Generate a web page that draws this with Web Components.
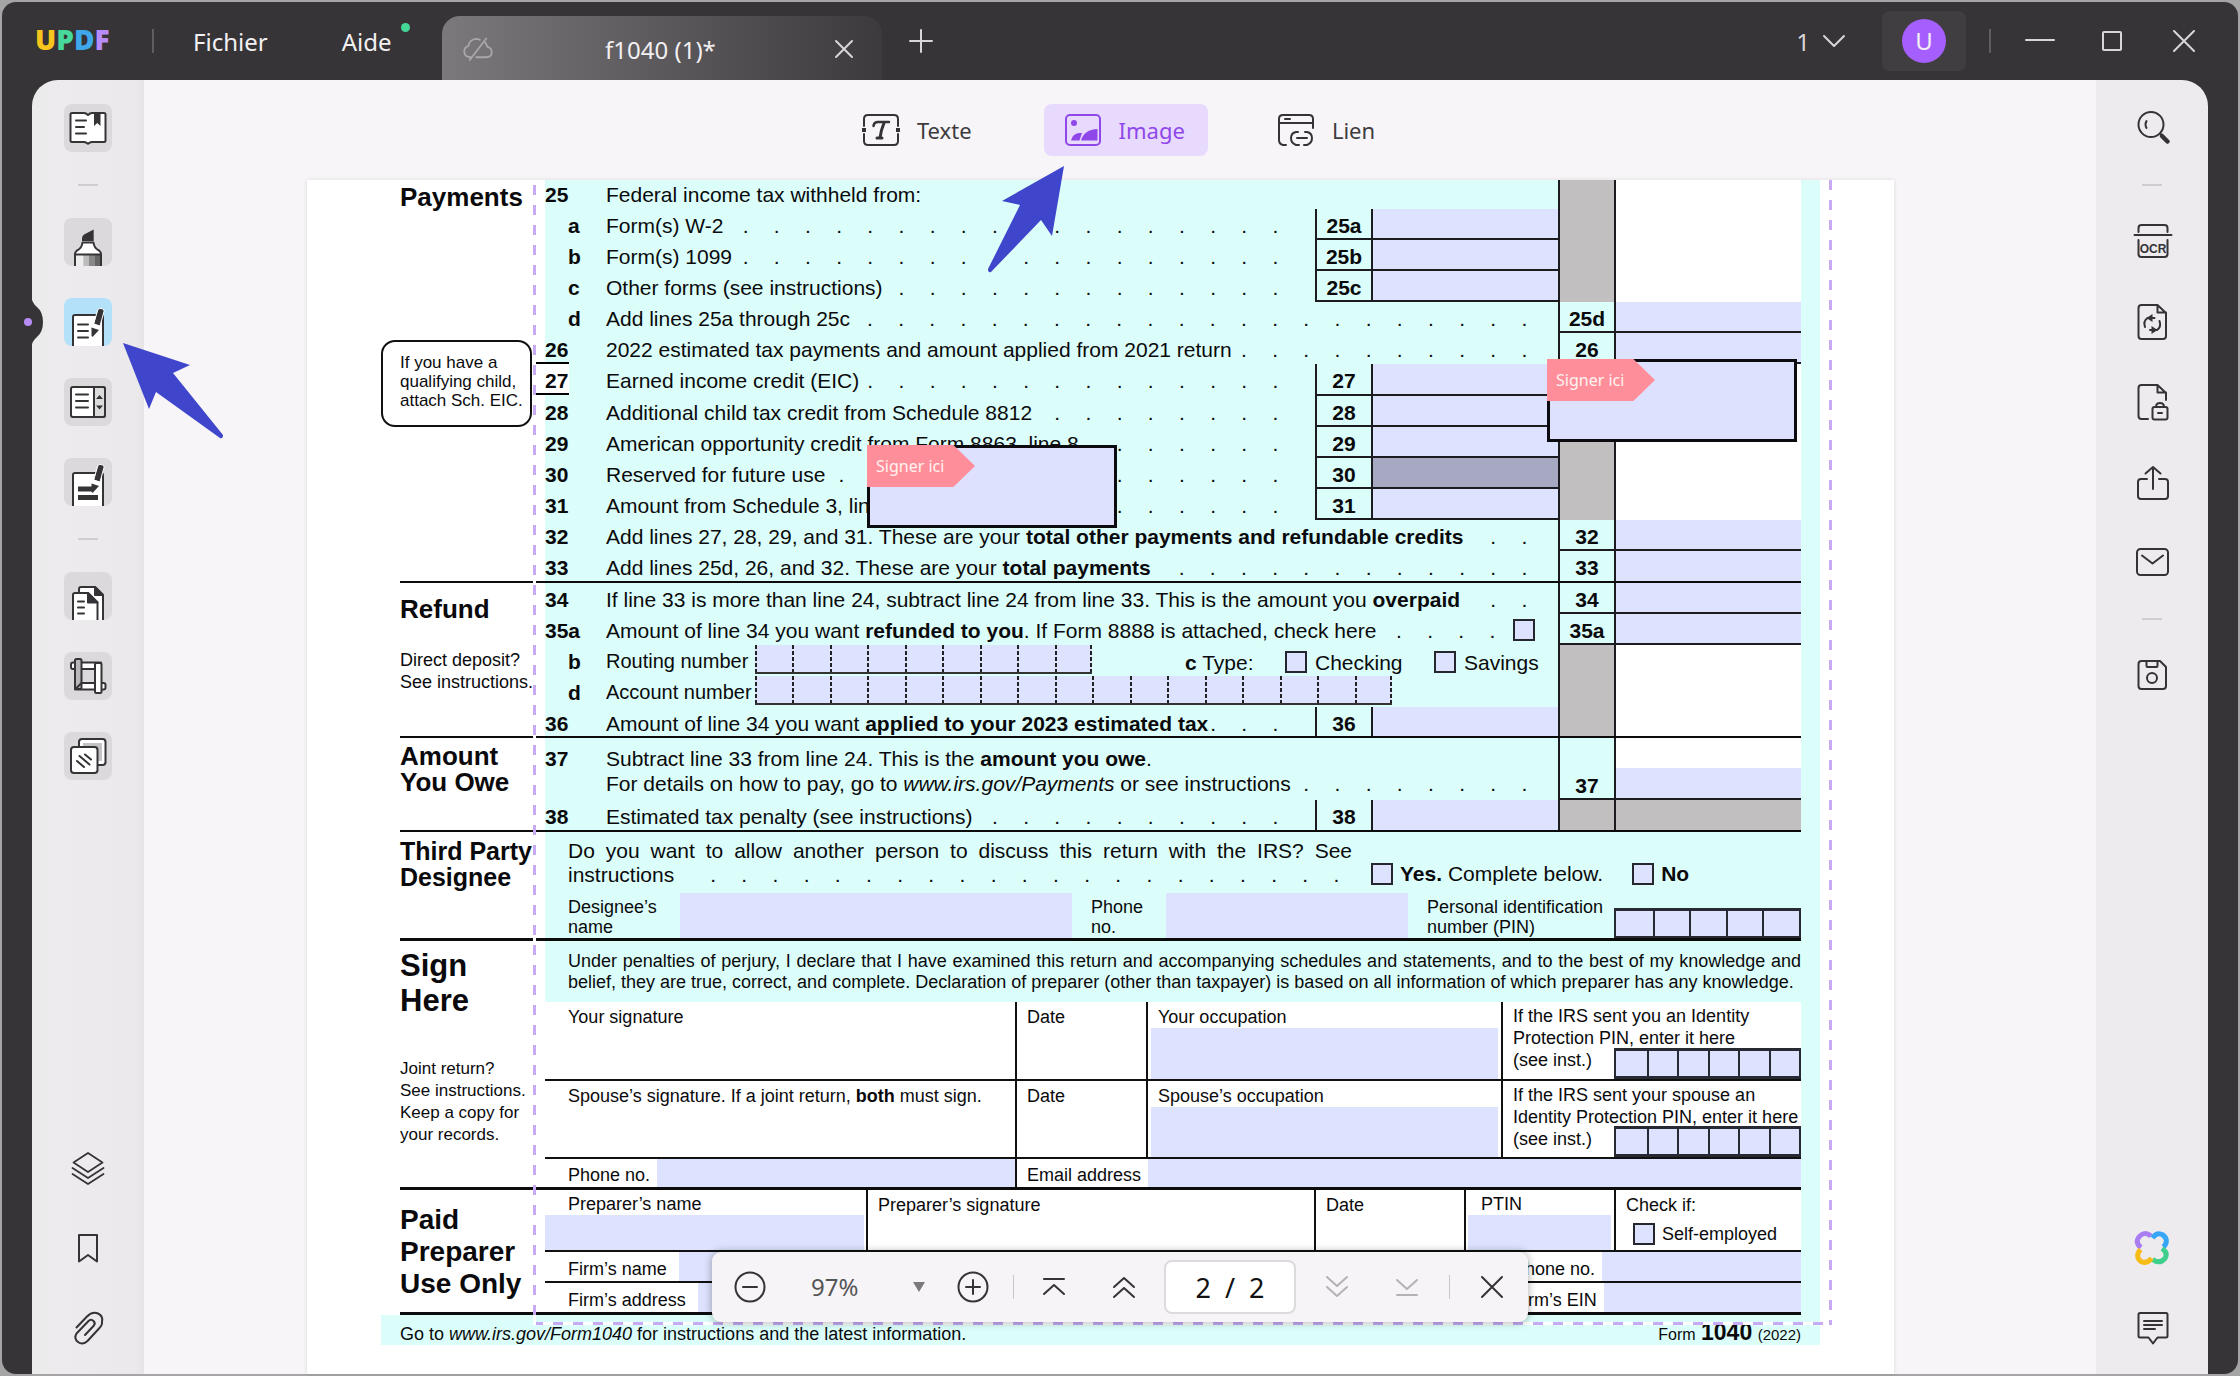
<!DOCTYPE html>
<html lang="fr">
<head>
<meta charset="utf-8">
<title>UPDF - f1040 (1)</title>
<style>
html, body { height: 100%; }
body { margin: 0; background: #a6a5a6; font-family: "Noto Sans", "Open Sans", sans-serif; }
</style>
</head>
<body>
<updf-window></updf-window>
<script>
const define = (name, html, setup) => {
  const template = document.createElement('template');
  template.innerHTML = html;
  customElements.define(name, class extends HTMLElement {
    connectedCallback() {
      if (this.shadowRoot) return;
      const root = this.attachShadow({ mode: 'open' });
      root.append(template.content.cloneNode(true));
      if (setup) setup(this, root);
    }
  });
};

/* ---------- icons ---------- */
const INK = '#353336';
const pencil = y => `<g transform="translate(0 ${y})"><path d="M34 11.500q1-1.500 3-1l1.500.5q2 .8 1.500 2.500L36 28l-6-2z" fill="${INK}" stroke="#fff" stroke-width="1"/><path d="M27.500 29.500l7.500 2.500-6 6.500q-1.500.5-1.500-1z" fill="${INK}" stroke="none"/></g>`;
const ICONS = {
  book: `<path d="M8 9h12q2 0 4 2 2-2 4-2h12q1.500 0 1.500 1.500v26q0 1.500-1.500 1.500H28q-2 0-4 1.800-2-1.800-4-1.800H8q-1.500 0-1.500-1.500v-26Q6.500 9 8 9z" fill="#fff"/><path d="M12 16.500h10M12 23h8M12 29.500h10"/><path d="M30 9h6.500v13l-3.200-3-3.300 3z" fill="${INK}" stroke="none"/>`,
  marker: `<defs><linearGradient id="g"><stop offset=".3" stop-color="#eee"/><stop offset=".32" stop-color="#bbb"/><stop offset=".55" stop-color="#bbb"/><stop offset=".56" stop-color="#888"/><stop offset=".78" stop-color="#888"/><stop offset=".8" stop-color="#666"/></linearGradient></defs><path d="M18 23v-3q0-2 2-3.500l9.700-5V23z" fill="${INK}" stroke="none"/><path d="M11 49V36q0-2 2-3.500 5-2.500 5.500-8h11q.5 5.500 5.500 8 2 1.500 2 3.500v13z" fill="#fff"/><path d="M12 37h24v12H12z" fill="url(#g)" stroke="none"/><path d="M11 36.500h26"/>`,
  edit: `<path d="M9 49V19q0-2 2-2h26q2 0 2 2v30z" fill="#fff"/><path d="M14 26.500h10M14 33h10M14 39.500h10"/>${pencil(0)}`,
  formfield: `<rect x="7" y="9" width="34" height="30" rx="2" fill="#fff"/><path d="M30 9h9q2 0 2 2v26q0 2-2 2h-9z" fill="#dcdcdc"/><path d="M12 16.500h12M12 23h12M12 29.500h12"/><path d="M32 21l3.500-4 3.500 4zM32 27.500l3.500 4 3.500-4z" fill="${INK}" stroke="none"/>`,
  redact: `<path d="M9 49V17q0-2 2-2h26q2 0 2 2v32z" fill="#fff"/><path d="M14 28.500h14v5H14zM14 37h20v5H14z" fill="${INK}" stroke="none"/>${pencil(-4)}`,
  pages: `<path d="M15 49V17q0-2 2-2h14l8 8v26z" fill="#fff"/><path d="M31 15l8 8h-8z" fill="${INK}"/><path d="M9 49V23q0-2 2-2h13l9.500 9.500V49z" fill="#fff"/><path d="M24 21l9.500 9.500H24z" fill="${INK}"/><path d="M14 29.500h6M14 35.500h6M14 41.500h6"/>`,
  crop: `<rect x="7" y="10.500" width="30" height="6.500" rx="2" fill="#fff"/><rect x="11" y="31" width="30.500" height="6.500" rx="2" fill="#fff"/><rect x="11" y="7" width="6.500" height="30" rx="1.500" fill="#b9b7b9"/><path d="M11 37.500l6.500-6.500M31 17l6-6.500"/><rect x="31" y="11" width="6.500" height="30" rx="1.500" fill="#fff"/>`,
  stack: `<rect x="15" y="7" width="26.500" height="26" rx="3" fill="#fff"/><rect x="19" y="11" width="19" height="18" fill="#c4c2c4" stroke="none"/><rect x="7" y="15" width="26.500" height="26" rx="3" fill="#fff"/><path d="M13 29l7 6M15.500 24l10 8.500M21 22.500l6 5"/>`,
  layers: `<path d="M24 9l14.500 9.500L24 28 9.500 18.500zM8.500 24L24 34l15.500-10M8.500 30L24 40l15.500-10" stroke-width="1.800"/>`,
  mark: `<path d="M15 11h18v26.500L24 31l-9 6.500z"/>`,
  clip: `<path d="M12.500 23.500L23 12.500q5.500-5.500 11-3t4 8.500q.5 3-3 6.500L23.500 37q-5 4.500-9.500 1t-1.500-8.500l12-12.500q2.500-2.500 5 0t0 5L21 31"/>`,
  search: `<circle cx="23" cy="20.500" r="12.500"/><path d="M18.500 17q-2 3.500 0 7" /><path d="M32.500 30l2 2" /><path d="M34 32l5.500 5.500" stroke-width="4.500"/>`,
  ocr: `<path d="M10.500 14V10q0-3 3-3h23q3 0 3 3v4M6.500 17h37M10.500 22v14q0 3 3 3h23q3 0 3-3V22"/><text x="25" y="34.500" text-anchor="middle" font-family="Liberation Sans, sans-serif" font-weight="700" font-size="12" fill="${INK}" stroke="none">OCR</text>`,
  convert: `<path d="M13.500 7h16l8.500 8v23q0 3-3 3H13.500q-3 0-3-3V10q0-3 3-3zM29.500 7v7.500H38"/><path d="M17 29q-2-6 2.500-9h7M31.500 23q2 6-2.500 9h-7"/><path d="M18.500 20l6-4v8zM29.500 32l-6-4v8z" fill="${INK}" stroke="none"/>`,
  lock: `<path d="M20 41h-6.500q-3 0-3-3V10q0-3 3-3h16l8.500 8v7M29.500 7v7.500H38"/><rect x="24.500" y="29" width="15" height="12.500" rx="2"/><path d="M28 29q0-4 4-4t4 4M30 35h4"/>`,
  share: `<path d="M19 21h-6q-3 0-3 3v14q0 3 3 3h24q3 0 3-3V24q0-3-3-3h-6M25 31V9M17.500 15.500L25 9l7.500 6.500"/>`,
  mail: `<rect x="9" y="11" width="31" height="26" rx="3.500"/><path d="M14 17.500l10.500 8 10.500-8"/>`,
  save: `<path d="M13.500 9H32l6 6v19q0 3-3 3H13.500q-3 0-3-3V12q0-3 3-3zM18.500 9v5q0 1 1 1h9q1 0 1-1V9"/><circle cx="24" cy="26" r="5"/>`,
  petals: `<g fill="none" stroke-width="5" stroke-linecap="butt"><path d="M13 23.500q-6-4.500-2.500-10Q16 6.500 23 12" stroke="#ab7df2"/><path d="M24.500 14q4.500-6.500 10.500-3 6.500 5.500.5 12" stroke="#37a6f5"/><path d="M34 24.500q6.500 4.500 3 10-5.500 6-12.500 1" stroke="#3fcf8d"/><path d="M23.500 34q-4 6.500-10.500 3.500-6.500-5-.5-12" stroke="#f6bd19"/></g>`,
  comment: `<path d="M12 9h26q1.500 0 1.500 1.500V32q0 1.500-1.500 1.500h-8.500L25 39.500l-4.500-6H12q-1.500 0-1.500-1.500V10.500Q10.500 9 12 9zM16 17h18M16 21h18M16 25h11"/>`,
  cloud: `<path d="M17 33h-2q-6-1-6-6.500 0-4.500 4.500-6 1.500-7 8.500-7.500 2 0 4 1M32 17q1.500 2 2 4.500 5 1.500 5 6 0 5-6 5.500H22M33 12.500L15 36" stroke="#a9a7a9"/>`,
  close: `<path d="M16 16l16 16M32 16L16 32" stroke="currentColor"/>`,
  bigclose: `<path d="M14 14l20 20M34 14L14 34" stroke="currentColor"/>`,
  add: `<path d="M24 13v22M13 24h22" stroke="#d8d6d8"/>`,
  minimise: `<path d="M10 23h28" stroke="#d8d6d8"/>`,
  maximise: `<rect x="15" y="15" width="18" height="18" rx="1" stroke="#d8d6d8"/>`,
  chevron: `<path d="M14 19l10 10 10-10" stroke="#d8d6d8"/>`,
  text: `<path d="M7 20v-7q0-4 4-4h26q4 0 4 4v7M7 28v7q0 4 4 4h26q4 0 4-4v-7"/><path d="M5 24h4M39 24h4" stroke-width="4" stroke-linecap="butt"/><path d="M16.500 20q.5-4 4.500-4h11" stroke-width="2.500"/><path d="M27 17q-3 7-4 15M20 32h5" stroke-width="3"/>`,
  image: `<rect x="7" y="9" width="34" height="30" rx="4" stroke="#9047ea"/><circle cx="15" cy="17" r="3" fill="#9047ea" stroke="none"/><path d="M12 34.500q1.500-7 8-7.500h3l-2.500 7.500zM22 34.500q3-11 16.500-11.500v11.500z" fill="#9047ea" stroke="none"/>`,
  link: `<path d="M14 39h-3q-4-1-4-5V13q0-4 4-4h26q4 0 4 4v9M7 17h34M13 13h5"/><path d="M26 26h-2q-5 1-5 6t5 7h3M33 26h2q5 1 5 6t-5 7h-3M25 32h10"/>`,
  zoomout: `<circle cx="24" cy="24" r="14.500"/><path d="M17 24h14"/>`,
  zoomin: `<circle cx="24" cy="24" r="14.500"/><path d="M17 24h14M24 17v14"/>`,
  first: `<path d="M14 16h20M14 31l10-9 10 9"/>`,
  prev: `<path d="M14 24l10-9 10 9M14 34l10-9 10 9"/>`,
  next: `<path d="M14 14l10 9 10-9M14 24l10 9 10-9" stroke="#b4b2b4"/>`,
  last: `<path d="M14 17l10 9 10-9M14 32h20" stroke="#b4b2b4"/>`
};
define('ui-icon', `<style>:host{display:block;width:48px;height:48px;flex:none}svg{display:block;width:100%;height:100%}</style>`,
  (host, root) => root.append(Object.assign(document.createElement('div'), {
    style: 'height:100%',
    innerHTML: `<svg viewBox="0 0 48 48" fill="none" stroke="${INK}" stroke-width="2" stroke-linecap="round" stroke-linejoin="round" aria-hidden="true">${ICONS[host.getAttribute('name')]}</svg>`
  })));

/* ---------- title bar ---------- */
define('title-bar', `<style>
:host{display:flex;height:78px;align-items:center;background:#363436;color:#f2f0f2;font-size:24px;border-radius:14px 14px 0 0}
button{all:unset;cursor:pointer;display:flex;align-items:center;line-height:33px}
.logo{margin-left:33px;font-size:28px;font-weight:700;line-height:34px;width:76px;padding-bottom:4px}
.logo b:nth-child(1){color:#f8c51c}.logo b:nth-child(2){color:#46d99a}.logo b:nth-child(3){color:#3ea8ea}.logo b:nth-child(4){color:#b78cfa}
.rule{width:2px;height:24px;background:#5f5d5f}
.logo + .rule{margin-left:41px}
.menu{margin-left:39px}
.help{position:relative;margin-left:74px}
.help::after{content:"";position:absolute;right:-19px;top:-2px;width:9px;height:9px;border-radius:50%;background:#45d796}
.tab{box-sizing:border-box;width:440px;height:64px;align-self:flex-end;margin-left:51px;padding:1px 14px 0;border-radius:18px 18px 0 0;display:flex;align-items:center;background:linear-gradient(90deg,#7b797b,#5b595b 50%,#3c3a3c)}
.tab span{flex:1;text-align:center;padding-top:2px}
.tab .state{width:44px;height:44px}
.add{margin-left:15px}
.space{flex:1}
.count{color:#d8d6d8;margin-right:24px}
.user{width:84px;height:60px;justify-content:center;background:#403e40;border-radius:8px}
.user i{font-style:normal;width:44px;height:44px;border-radius:50%;background:#a65fff;text-align:center;line-height:44px}
.user + .rule{margin:0 25px 0 23px}
.win{display:flex;gap:24px;margin-right:30px;color:#d8d6d8}
.close{color:#d8d6d8}
</style>
<div class="logo" aria-label="UPDF"><b>U</b><b>P</b><b>D</b><b>F</b></div><div class="rule"></div>
<button class="menu">Fichier</button><button class="help">Aide</button>
<div class="tab"><ui-icon class="state" name="cloud"></ui-icon><span>f1040 (1)*</span><button class="close" aria-label="Fermer l’onglet"><ui-icon name="close"></ui-icon></button></div>
<button class="add" aria-label="Nouvel onglet"><ui-icon name="add"></ui-icon></button>
<div class="space"></div>
<button class="count">1<ui-icon name="chevron"></ui-icon></button>
<button class="user" aria-label="Compte"><i>U</i></button><div class="rule"></div>
<div class="win"><button aria-label="Réduire"><ui-icon name="minimise"></ui-icon></button><button aria-label="Agrandir"><ui-icon name="maximise"></ui-icon></button><button aria-label="Fermer"><ui-icon name="bigclose"></ui-icon></button></div>`);

/* ---------- side rails ---------- */
define('tool-rail', `<style>
:host{box-sizing:border-box;width:112px;flex:none;display:flex;flex-direction:column;align-items:center;gap:32px;padding:24px 0 22px;background:#edebed}
:host([side=left]){border-radius:26px 0 0 0;background:linear-gradient(90deg,#ebebea,#edebed 20%,#ebe9eb 92%,#e6e4e6)}
:host([side=right]){border-radius:0 26px 0 0}
button{all:unset;cursor:pointer;width:48px;height:48px;border-radius:8px;overflow:hidden;flex:none}
button.tile{background:#dbd9db}
button.active{background:#b4e1fa}
hr{width:20px;height:2px;border:0;margin:0;background:#cfcdcf}
.space{flex:1}
</style>`, (host, root) => {
  const tiled = host.getAttribute('side') === 'left';
  const groups = host.getAttribute('tools').split('/');
  groups[0].split(' ').forEach(name => add(name, tiled));
  root.append(Object.assign(document.createElement('div'), { className: 'space' }));
  groups[1].split(' ').forEach(name => add(name, false));
  function add(name, tile) {
    if (name === '-') return root.append(document.createElement('hr'));
    const button = document.createElement('button');
    button.setAttribute('aria-label', name);
    button.className = name === host.getAttribute('active') ? 'active' : tile ? 'tile' : '';
    button.innerHTML = `<ui-icon name="${name}"></ui-icon>`;
    root.append(button);
  }
});

/* ---------- edit bar ---------- */
define('edit-bar', `<style>
:host{display:flex;height:100px;align-items:center;justify-content:center;gap:49px;font-size:22px;color:#3d3b3e}
button{all:unset;cursor:pointer;display:flex;align-items:center;gap:12px;height:52px;padding:0 23px 0 15px;border-radius:8px}
button.on{background:#e8dafd;color:#9047ea}
</style>
<button><ui-icon name="text"></ui-icon>Texte</button><button class="on" aria-pressed="true"><ui-icon name="image"></ui-icon>Image</button><button><ui-icon name="link"></ui-icon>Lien</button>`);

/* ---------- page navigator ---------- */
define('page-nav', `<style>
:host{display:flex;align-items:center;box-sizing:border-box;width:816px;height:70px;padding:0 11px 0 14px;background:#f6f4f7;border-radius:9px;box-shadow:0 0 8px rgba(0,0,0,.35);color:#555}
button{all:unset;cursor:pointer;flex:none;color:#353336}
label{position:relative;display:flex;align-items:center;margin:0 24px 0 37px}
select{all:unset;font-size:24px;width:102px;line-height:34px}
i{width:1px;height:24px;background:#c9c7c9;margin:0 16px}
i.end{margin:0 18px}
.tri{width:0;border:6px solid transparent;border-top:10px solid #7b797b;border-bottom:0}
.gap{width:22px}
input{box-sizing:border-box;width:132px;height:54px;margin:0 17px 0 16px;border:2px solid #dcdadc;border-radius:8px;background:#fff;font:27px "Noto Sans",sans-serif;text-align:center;color:#111;padding:0}
</style>
<button aria-label="Zoom arrière"><ui-icon name="zoomout"></ui-icon></button>
<label><select aria-label="Zoom"><option>97%</option></select><span class="tri"></span></label>
<button aria-label="Zoom avant"><ui-icon name="zoomin"></ui-icon></button><i></i>
<button aria-label="Première page"><ui-icon name="first"></ui-icon></button><span class="gap"></span>
<button aria-label="Page précédente"><ui-icon name="prev"></ui-icon></button>
<input aria-label="Page" value="2  /  2">
<button aria-label="Page suivante"><ui-icon name="next"></ui-icon></button><span class="gap"></span>
<button aria-label="Dernière page"><ui-icon name="last"></ui-icon></button><i class="end"></i>
<button aria-label="Fermer"><ui-icon name="bigclose"></ui-icon></button>`);

/* ---------- form parts ---------- */
define('dot-leader', `<style>:host{display:grid;grid-auto-flow:column;grid-auto-columns:1fr;flex:none;width:calc(var(--n) * 187px / 6);text-align:center}</style>`,
  (host, root) => {
    const n = +host.getAttribute('n');
    host.style.setProperty('--n', n);
    for (let i = 0; i < n; i++) root.append(Object.assign(document.createElement('span'), { textContent: '.' }));
  });

define('tick-box', `<style>:host{display:inline-flex;flex:none}input{appearance:none;box-sizing:border-box;width:22px;height:22px;margin:0;border:2px solid #26262e;background:#dde3fe}</style><input type="checkbox">`,
  (host, root) => root.querySelector('input').setAttribute('aria-label', host.getAttribute('label')));

/* A row of one-character cells: solid for PINs, dashed for bank numbers. */
define('comb-field', `<style>
:host{--dash:repeating-linear-gradient(#222 0 4px,transparent 4px 6px);display:grid;grid-auto-flow:column;grid-auto-columns:1fr;box-sizing:border-box;flex:none;background:#dde3fe}
:host(:not([dotted])){width:187px;height:31px;border:3px solid #272a33;border-left-width:2px;border-right-width:2px}
:host([dotted]){height:29px;border-bottom:2px solid #333;background:var(--dash) 100% 0/2px 100% no-repeat #dde3fe}
input{all:unset;width:100%;box-sizing:border-box;min-width:0}
:host(:not([dotted])) input + input{border-left:2px solid #272a33}
:host([dotted]) input{background:var(--dash) 0 0/2px 100% no-repeat}
</style>`, (host, root) => {
  for (let i = 1; i <= +host.getAttribute('cells'); i++) {
    const input = document.createElement('input');
    input.maxLength = 1;
    input.setAttribute('aria-label', host.getAttribute('label') + ' ' + i);
    root.append(input);
  }
});

define('sign-tag', `<style>
:host{display:block;position:absolute;box-sizing:border-box;width:250px;height:83px;border:3px solid #0c0c10;background:#dde1fe}
span{display:block;width:108px;height:42px;margin:-3px;box-sizing:border-box;padding-left:9px;background:#ff8e9b;clip-path:polygon(0 0,80% 0,100% 50%,80% 100%,0 100%);color:#fff3f0;font:16px/42px "Noto Sans",sans-serif}
</style><span><slot></slot></span>`);

define('tax-line', `<style>
:host{display:grid;grid-template-columns:61px 1fr 56px 187px 56px 187px;grid-template-rows:100%;height:31px;margin-right:19px;font-size:21px;line-height:27px;white-space:nowrap}
:host([tall]){height:32px}:host([short]){height:29px}:host([double]){height:62px}
.no{font-weight:700;padding-top:3px;box-sizing:border-box}
.no.sub{padding-left:23px}
:host([short]) .no,:host([short]) .text{padding-top:1px}
:host([flag]) .no{width:36px;height:33px;margin:-2px 0 0 -12px;padding:3px 0 0 12px;background:#fff;border:solid #000;border-width:2px 0}
.text{display:flex;min-width:0;padding-top:3px;grid-column:2/5}
:host([box]) .text{grid-column:2/3}
:host([double]) .no{padding-top:7px}
:host([double]) .text{padding-top:8px;line-height:25px}
.fill{flex:1;min-width:0}
dot-leader{margin-right:18px}
:host([box]) dot-leader{margin-right:24px}
:host([double]) dot-leader{align-self:flex-start;padding-top:25px}
.cell{box-sizing:border-box;border:solid #1c1c20;border-width:0 0 2px 2px;font-weight:700;text-align:center;padding-top:3px}
input{all:unset;display:block;box-sizing:border-box;width:100%;height:100%;background:#dde3fe}
.entry,.amt{padding:0}
.entry[data-k=shade] input{background:#a7a9c3}
.col[data-k=grey]{background:#c1bfc0;border-bottom:0}
.amt[data-k=white]{background:#fff;border-bottom:0}
.amt[data-k=grey]{background:#c1bfbf}
.amt[data-k=half]{background:linear-gradient(#fff 50%,#dde3fe 50%)}
.amt[data-k=half] input{background:none}
.col{grid-column:5}.amt{grid-column:6}
:host([double]) .col{padding-top:34px}
</style>
<div class="no"></div>
<div class="text"><div class="fill"><slot></slot></div><slot name="end"></slot></div>`, (host, root) => {
  const get = k => host.getAttribute(k);
  const no = root.querySelector('.no');
  no.textContent = get('no');
  if (/^[a-d]$/.test(get('no'))) no.classList.add('sub');
  if (get('dots')) {
    const dots = document.createElement('dot-leader');
    dots.setAttribute('n', get('dots'));
    root.querySelector('slot[name=end]').before(dots);
    if (host.querySelector('[slot=end]')) dots.style.marginRight = '5px';
  }
  const cell = (cls, kind, text, field) => {
    const div = document.createElement('div');
    div.className = 'cell ' + cls;
    div.dataset.k = kind || '';
    if (text) div.textContent = text;
    if (field) { const i = document.createElement('input'); i.setAttribute('aria-label', field); div.append(i); }
    root.append(div);
  };
  if (get('box')) { cell('box', '', get('box')); cell('entry', get('entry'), '', 'Ligne ' + get('box')); }
  const col = get('col');
  cell('col', col ? '' : 'grey', col);
  const amt = get('amt') || (col ? 'field' : 'white');
  cell('amt', amt, '', amt === 'field' || amt === 'half' ? 'Ligne ' + col : '');
});

define('tax-section', `<style>
:host{display:grid;position:relative;grid-template-columns:145px 1fr}
:host::after{content:"";grid-column:1/-1;height:2px;margin:-2px 19px 0 0;background:#0c0c0c}
:host([heavy])::after{height:3px;margin-top:-3px}
.body{background:#dcfefa;min-width:0}
</style><div><slot name="side"></slot></div><div class="body"><slot></slot></div>`);

define('tax-form', `<style>
:host{display:block;position:relative;background:#fff;box-shadow:0 0 4px rgba(0,0,0,.12);padding:0 74px 0 93px;color:#0a0a0c;font-family:"Liberation Sans",Arial,sans-serif;font-size:18px;line-height:22px}
h2,p{margin:0}
h2{font-size:26px;line-height:26px;white-space:nowrap}
h2.third-head{font-size:25px}
h2.sign-head{font-size:31px;line-height:35px}
h2.paid-head{font-size:28px;line-height:32px}
[slot=side]{padding-top:var(--top)}
.note{margin-top:27px;white-space:nowrap}
.note.sm{margin-top:40px;font-size:17px}
input.f{all:unset;display:block;background:#dde3fe;min-width:0;box-sizing:border-box}
.callout{position:absolute;left:-19px;top:160px;width:151px;height:87px;box-sizing:border-box;border:2px solid #111;border-radius:14px;padding:11px 0 0 17px;font-size:17px;line-height:19px;background:#fff;white-space:nowrap}
.more{margin-left:13px}
.bank{display:flex;align-items:center;font-size:20px}
.bank span{width:149px}
.bank comb-field{margin-top:-5px}
.routing{width:337px}.account{width:637px}
.attach{margin:2px 23px 0 0}
.type{display:flex;align-items:center;width:373px}
.type label{display:flex;gap:8px;align-items:center}
.type span{width:100px}.type label:nth-of-type(1){width:149px}
.third{height:109px;margin-right:19px;padding-left:23px;box-sizing:border-box;font-size:21px;display:flex;flex-direction:column}
.third .q{width:784px;line-height:24px;padding-top:7px;height:52px;box-sizing:border-box}
.third .q p:first-child{text-align:justify;text-align-last:justify}
.row{display:flex}
.top{height:61px}
.inst dot-leader{margin-left:auto}
.ans{display:flex;flex:1;padding:31px 0 0 19px;gap:7px;align-items:center;height:22px}
.ans tick-box:nth-of-type(2){margin-left:22px}
.desig{display:flex;line-height:20px;height:46px;white-space:nowrap;font-size:18px}
.desig > *{flex:none}
.desig label,.desig span{padding-top:4px}
.desig .f{height:46px;margin-right:19px}
.desig comb-field{margin-top:15px}
.w1{width:112px}input.w2{width:392px}.w3{width:75px}input.w4{width:242px}
.desig span{margin-right:auto}
.decl{height:51px;margin-right:19px;padding:10px 0 0 23px;line-height:21px;white-space:nowrap}
.decl p:first-child{text-align:justify;text-align-last:justify}
.cells{display:grid;grid-template-rows:100%;margin-right:19px;background:#fff}
.sig{grid-template-columns:1fr 131px 355px 300px;height:78px}
.sig.first{height:79px}
.contact{grid-template-columns:1fr 786px;height:31px}
.prep{grid-template-columns:1fr 448px 150px 150px 187px;height:62px}
.cells > div{border-left:2px solid #111;border-bottom:2px solid #111;padding:4px 0 0 10px;box-sizing:border-box;min-width:0;white-space:nowrap}
.cells > div:first-child{border-left:0;padding-left:23px}
.occ{display:flex;flex-direction:column}
.occ .f{flex:1;margin:0 3px 0 -7px}
.cells > div.irs{position:relative;padding-top:3px}
.irs comb-field{position:absolute;right:0;bottom:0}
.cells > div.inl{display:flex;align-items:stretch;line-height:32px;padding-top:0}
.inl .f{flex:1;margin-left:7px}
.firm > .inl label{line-height:35px}
.firm > .inl .f{margin-left:12px}
.cells > div.namec{padding:4px 2px 0 0;display:flex;flex-direction:column}
.namec span{padding-left:23px;line-height:21px}.namec .f{flex:1}
.ptin{display:flex;flex-direction:column}
.cells > div.ptin{padding:4px 3px 0 2px}.ptin span{padding-left:13px;line-height:21px}.ptin .f{flex:1}
.self{display:flex;gap:7px;align-items:center;padding:7px 0 0 7px}
.firm{grid-template-columns:1fr 310px;height:31px}
.firm.last{height:32px}
.firm > div:last-child{border-left:0}
.firm > div:last-child label{margin-left:12px}
.firm > div.inl:last-child .f{margin-left:7px}
.foot{display:flex;align-items:baseline;height:30px;margin-left:-19px;padding:0 19px;line-height:34px;background:#dcfefa}
.foot span{margin-left:auto;font-size:16px}.foot b{font-size:23px;margin:0 1px}.foot small{font-size:15px}
.frame{position:absolute;left:226px;right:62px;top:0;bottom:49px;pointer-events:none;background:
 repeating-linear-gradient(#fff 0 5px,#c7aaf3 5px 15px,#fff 15px 20px) 0 0/3px 100% no-repeat,
 repeating-linear-gradient(#c7aaf3 0 10px,#fff 10px 20px) 100% 0/3px 100% no-repeat,
 repeating-linear-gradient(90deg,#c7aaf3 0 10px,#fff 10px 20px) 0 100%/100% 3px no-repeat}
.s1{left:560px;top:265px}.s2{right:97px;top:179px}
</style>
<tax-section>
 <div slot="side" style="--top:4px"><h2>Payments</h2></div>
 <div class="callout" slot="side">If you have a<br>qualifying child,<br>attach Sch. EIC.</div>
 <tax-line short no="25">Federal income tax withheld from:</tax-line>
 <tax-line no="a" dots="18" box="25a">Form(s) W-2</tax-line>
 <tax-line no="b" dots="18" box="25b">Form(s) 1099</tax-line>
 <tax-line no="c" dots="13" box="25c">Other forms (see instructions)</tax-line>
 <tax-line no="d" dots="22" col="25d">Add lines 25a through 25c</tax-line>
 <tax-line no="26" dots="10" col="26">2022 estimated tax payments and amount applied from 2021 return</tax-line>
 <tax-line tall flag no="27" dots="14" box="27">Earned income credit (EIC)</tax-line>
 <tax-line no="28" dots="8" box="28">Additional child tax credit from Schedule 8812</tax-line>
 <tax-line no="29" dots="6" box="29">American opportunity credit from Form 8863, line 8</tax-line>
 <tax-line no="30" dots="6" box="30" entry="shade">Reserved for future use<span class="more">.</span></tax-line>
 <tax-line no="31" dots="6" box="31">Amount from Schedule 3, line 15</tax-line>
 <tax-line no="32" dots="2" col="32">Add lines 27, 28, 29, and 31. These are your <b>total other payments and refundable credits</b></tax-line>
 <tax-line tall no="33" dots="12" col="33">Add lines 25d, 26, and 32. These are your <b>total payments</b></tax-line>
</tax-section>
<tax-section>
 <div slot="side" style="--top:13px"><h2>Refund</h2><p class="note">Direct deposit?<br>See instructions.</p></div>
 <tax-line no="34" dots="2" col="34">If line 33 is more than line 24, subtract line 24 from line 33. This is the amount you <b>overpaid</b></tax-line>
 <tax-line no="35a" dots="4" col="35a">Amount of line 34 you want <b>refunded to you</b>. If Form 8888 is attached, check here<tick-box class="attach" slot="end" label="Form 8888"></tick-box></tax-line>
 <tax-line no="b"><div class="bank"><span>Routing number</span><comb-field class="routing" dotted cells="9" label="Routing number"></comb-field></div>
  <div class="type" slot="end"><span><b>c</b> Type:</span><label><tick-box label="Checking"></tick-box>Checking</label><label><tick-box label="Savings"></tick-box>Savings</label></div></tax-line>
 <tax-line no="d"><div class="bank"><span>Account number</span><comb-field class="account" dotted cells="17" label="Account number"></comb-field></div></tax-line>
 <tax-line no="36" dots="3" box="36">Amount of line 34 you want <b>applied to your 2023 estimated tax</b></tax-line>
</tax-section>
<tax-section>
 <div slot="side" style="--top:5px"><h2>Amount<br>You Owe</h2></div>
 <tax-line double no="37" dots="8" col="37" amt="half">Subtract line 33 from line 24. This is the <b>amount you owe</b>.<br>For details on how to pay, go to <i>www.irs.gov/Payments</i> or see instructions</tax-line>
 <tax-line tall no="38" dots="10" box="38" amt="grey">Estimated tax penalty (see instructions)</tax-line>
</tax-section>
<tax-section heavy>
 <div slot="side" style="--top:6px"><h2 class="third-head">Third Party<br>Designee</h2></div>
 <div class="third">
  <div class="row top"><div class="q"><p>Do you want to allow another person to discuss this return with the IRS? See</p><div class="row inst">instructions<dot-leader n="21"></dot-leader></div></div>
   <div class="ans"><tick-box label="Yes"></tick-box><span><b>Yes.</b> Complete below.</span><tick-box label="No"></tick-box><b>No</b></div></div>
  <div class="desig"><label for="dn" class="w1">Designee’s<br>name</label><input id="dn" class="f w2"><label for="dp" class="w3">Phone<br>no.</label><input id="dp" class="f w4"><span>Personal identification<br>number (PIN)</span><comb-field cells="5" label="PIN"></comb-field></div>
 </div>
</tax-section>
<tax-section heavy>
 <div slot="side" style="--top:7px"><h2 class="sign-head">Sign<br>Here</h2><p class="note sm">Joint return?<br>See instructions.<br>Keep a copy for<br>your records.</p></div>
 <div class="decl"><p>Under penalties of perjury, I declare that I have examined this return and accompanying schedules and statements, and to the best of my knowledge and</p><p>belief, they are true, correct, and complete. Declaration of preparer (other than taxpayer) is based on all information of which preparer has any knowledge.</p></div>
 <div class="cells sig first"><div>Your signature</div><div>Date</div><div class="occ"><label for="yo">Your occupation</label><input id="yo" class="f"></div><div class="irs">If the IRS sent you an Identity<br>Protection PIN, enter it here<br>(see inst.)<comb-field cells="6" label="Identity PIN"></comb-field></div></div>
 <div class="cells sig"><div>Spouse’s signature. If a joint return, <b>both</b> must sign.</div><div>Date</div><div class="occ"><label for="so">Spouse’s occupation</label><input id="so" class="f"></div><div class="irs">If the IRS sent your spouse an<br>Identity Protection PIN, enter it here<br>(see inst.)<comb-field cells="6" label="Spouse PIN"></comb-field></div></div>
 <div class="cells contact"><div class="inl"><label for="ph">Phone no.</label><input id="ph" class="f"></div><div class="inl"><label for="em">Email address</label><input id="em" class="f"></div></div>
</tax-section>
<tax-section heavy>
 <div slot="side" style="--top:14px"><h2 class="paid-head">Paid<br>Preparer<br>Use Only</h2></div>
 <div class="cells prep"><div class="namec"><span>Preparer’s name</span><input class="f" aria-label="Preparer’s name"></div><div>Preparer’s signature</div><div>Date</div><div class="ptin"><span>PTIN</span><input class="f" aria-label="PTIN"></div><div>Check if:<label class="self"><tick-box label="Self-employed"></tick-box>Self-employed</label></div></div>
 <div class="cells firm"><div class="inl"><label for="fn">Firm’s name</label><input id="fn" class="f"></div><div class="inl"><label for="fp">Phone no.</label><input id="fp" class="f"></div></div>
 <div class="cells firm last"><div class="inl"><label for="fa">Firm’s address</label><input id="fa" class="f"></div><div class="inl"><label for="fe">Firm’s EIN</label><input id="fe" class="f"></div></div>
</tax-section>
<div class="foot"><div>Go to <i>www.irs.gov/Form1040</i> for instructions and the latest information.</div><span>Form <b>1040</b> <small>(2022)</small></span></div>
<div class="frame"></div>
<sign-tag class="s1">Signer ici</sign-tag><sign-tag class="s2">Signer ici</sign-tag>`);

/* ---------- window ---------- */
define('updf-window', `<style>
:host{display:flex;flex-direction:column;position:relative;box-sizing:border-box;height:100vh;padding:2px;overflow:hidden}
.body{flex:1;min-height:0;display:flex;background:#363436;padding:0 30px;border-radius:0 0 14px 14px}
main{flex:1;min-width:0;position:relative;display:flex;flex-direction:column;background:#f7f5f8}
tax-form{flex:1;margin:0 202px 0 163px}
page-nav{position:absolute;left:50%;bottom:52px;transform:translateX(-50%)}
.over{position:absolute;pointer-events:none}
.notch{left:22px;top:296px}
.a1{left:980px;top:160px}
.a2{left:120px;top:338px}
</style>
<title-bar></title-bar>
<div class="body">
 <tool-rail side="left" active="edit" tools="book - marker edit formfield redact - pages crop stack/layers mark clip"></tool-rail>
 <main><edit-bar></edit-bar><tax-form></tax-form><page-nav></page-nav></main>
 <tool-rail side="right" tools="search - ocr convert lock share mail - save/petals comment"></tool-rail>
</div>
<svg class="over notch" width="24" height="52"><path d="M9 0q1 7 6 11 6 5 6 15t-6 15q-5 4-6 11z" fill="#363436"/><circle cx="6" cy="26" r="4" fill="#b78cf5"/></svg>
<svg class="over a1" width="90" height="116"><path d="M84 6L22 41l18 4L8 109q0 4 3 3L61 60l11 16z" fill="#3f46cb"/></svg>
<svg class="over a2" width="110" height="106"><path d="M3 5l67 22-17 8 50 62q0 4-3 3L36 54 29 71z" fill="#3f46cb"/></svg>`);
</script>
</body>
</html>
